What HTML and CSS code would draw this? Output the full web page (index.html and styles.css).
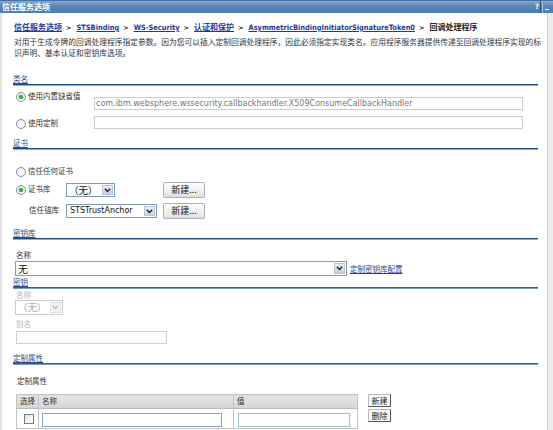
FILE: index.html
```html
<!DOCTYPE html>
<html lang="zh-CN">
<head>
<meta charset="utf-8">
<title>回调处理程序</title>
<link rel="stylesheet" href="styles.css">
</head>
<body>
<div class="window">
  <div class="titlebar">
    <span class="title">信任服务选项</span>
    <span class="tb-icons"><span class="tb-help">?</span><span class="tb-min"></span></span>
  </div>
  <div class="panel">
    <div class="crumbs"><a class="lnk">信任服务选项</a><span class="sep">&gt;</span><a class="lnk lat">STSBinding</a><span class="sep">&gt;</span><a class="lnk lat">WS-Security</a><span class="sep">&gt;</span><a class="lnk">认证和保护</a><span class="sep">&gt;</span><a class="lnk lat">AsymmetricBindingInitiatorSignatureToken0</a><span class="sep">&gt;</span><span class="cur">回调处理程序</span></div>
    <p class="desc">对用于生成令牌的回调处理程序指定参数。因为您可以插入定制回调处理程序，因此必须指定实现类名。应用程序服务器提供传递至回调处理程序实现的标<br>识声明、基本认证和密钥库选项。</p>

    <div class="sect sect-class"><span class="sect-t">类名</span></div>
    <div class="row row-builtin">
      <span class="radio on"></span><span class="rlabel cls-label">使用内置缺省值</span>
      <span class="tinput wide ro">com.ibm.websphere.wssecurity.callbackhandler.X509ConsumeCallbackHandler</span>
    </div>
    <div class="row row-custom">
      <span class="radio"></span><span class="rlabel cls-label">使用定制</span>
      <span class="tinput wide"></span>
    </div>

    <div class="sect sect-cert"><span class="sect-t">证书</span></div>
    <div class="row row-any"><span class="radio"></span><span class="rlabel">信任任何证书</span></div>
    <div class="cert-grid">
      <div class="gcell"><span class="radio on"></span><span class="rlabel">证书库</span></div>
      <div class="gcell"><span class="select s-none"><span class="sv">（无）</span><span class="sarrow"><svg width="7" height="5" viewBox="0 0 7 5"><polyline points="0.8,0.8 3.5,3.6 6.2,0.8" fill="none" stroke="#222" stroke-width="1.4"/></svg></span></span></div>
      <div class="gcell"><span class="btn">新建...</span></div>
      <div class="gcell"><span class="rlabel indent">信任锚库</span></div>
      <div class="gcell"><span class="select s-anchor"><span class="sv lat">STSTrustAnchor</span><span class="sarrow"><svg width="7" height="5" viewBox="0 0 7 5"><polyline points="0.8,0.8 3.5,3.6 6.2,0.8" fill="none" stroke="#222" stroke-width="1.4"/></svg></span></span></div>
      <div class="gcell"><span class="btn">新建...</span></div>
    </div>

    <div class="sect sect-ks"><span class="sect-t">密钥库</span></div>
    <div class="flabel ks-name">名称</div>
    <div class="ks-row">
      <span class="select s-ks"><span class="sv">无</span><span class="sarrow"><svg width="7" height="5" viewBox="0 0 7 5"><polyline points="0.8,0.8 3.5,3.6 6.2,0.8" fill="none" stroke="#222" stroke-width="1.4"/></svg></span></span>
      <a class="lnk small-link">定制密钥库配置</a>
    </div>

    <div class="sect sect-key"><span class="sect-t">密钥</span></div>
    <div class="flabel dis key-name">名称</div>
    <span class="select s-dis"><span class="sv">（无）</span><span class="sarrow"><svg width="7" height="5" viewBox="0 0 7 5"><polyline points="0.8,0.8 3.5,3.6 6.2,0.8" fill="none" stroke="#b8b8b8" stroke-width="1.4"/></svg></span></span>
    <div class="flabel dis key-alias">别名</div>
    <span class="tinput alias dis-in"></span>

    <div class="sect sect-props"><span class="sect-t">定制属性</span></div>
    <div class="flabel props-label">定制属性</div>
    <div class="props-row">
      <table class="ptable">
        <thead>
          <tr><th class="c-sel">选择</th><th class="c-name">名称</th><th class="c-val">值</th></tr>
        </thead>
        <tbody>
          <tr><td class="c-sel"><span class="chk"></span></td><td class="c-name"><span class="tinput cell-in name-in"></span></td><td class="c-val"><span class="tinput cell-in val-in"></span></td></tr>
        </tbody>
      </table>
      <div class="pbtns"><span class="sbtn">新建</span><span class="sbtn">删除</span></div>
    </div>
  </div>
</div>
</body>
</html>
```

FILE: styles.css
```css
* { box-sizing: border-box; }
html, body { margin: 0; padding: 0; }
body {
  background: #ffffff;
  font-family: "DejaVu Sans", "Noto Sans CJK SC", sans-serif;
  font-size: 7.5px;
  color: #333333;
}
.window {
  width: 553px;
  height: 430px;
  overflow: hidden;
  background: #ededed;
  display: flex;
  flex-direction: column;
}
.titlebar {
  height: 13px;
  flex: none;
  background: linear-gradient(#86abd2, #5a87b7 40%, #4f7cad);
  border-top: 1px solid #46709e;
  display: flex;
  align-items: center;
  justify-content: space-between;
}
.title {
  color: #ffffff;
  font-weight: bold;
  font-size: 8px;
  line-height: 10px;
  padding-left: 2px;
  font-family: "Noto Sans CJK SC", sans-serif;
}
.tb-icons { display: flex; height: 12px; align-items: stretch; }
.tb-help {
  color: #ffffff;
  font-weight: bold;
  font-size: 7px;
  line-height: 12px;
  width: 7px;
  text-align: center;
  border-right: 1px solid #35597f;
  margin-right: 1px;
}
.tb-min {
  width: 9px;
  border-left: 1px solid #9fc0e0;
  position: relative;
  margin-right: 2px;
}
.tb-min::after {
  content: "";
  position: absolute;
  left: 2px; right: 2px; bottom: 3px;
  height: 1px;
  background: #ffffff;
}
.panel {
  flex: 1;
  background: #ffffff;
  border-left: 2px solid #e3e3e3;
  border-right: 1px solid #d2d2d2;
  margin-right: 5px;
  padding: 0 9px 0 11px;
  display: flex;
  flex-direction: column;
  align-items: flex-start;
}
.lnk { color: #1c3b9e; text-decoration: underline; }
.crumbs {
  margin: 8px 0 0 1px;
  font-weight: bold;
  font-size: 8px;
  line-height: 11px;
  white-space: nowrap;
  color: #222222;
  font-family: "Noto Sans CJK SC", sans-serif;
}
.crumbs .lat {
  font-family: "DejaVu Sans Condensed", "DejaVu Sans", sans-serif;
  font-size: 7.4px;
}
.sep { margin: 0 5px 0 4px; font-family: "DejaVu Sans", sans-serif; font-size: 6.5px; }
.cur { color: #222222; }
.desc {
  margin: 3px -4px 0 1px;
  font-size: 7.75px;
  line-height: 11px;
  color: #333333;
  white-space: nowrap;
}
.sect {
  align-self: stretch;
  line-height: 9px;
  height: 10px;
  border-bottom: 1px solid #1e4b84;
  box-shadow: 0 1px 0 #8eb0d8;
}
.sect-t {
  color: #2a4e8e;
  font-size: 7.5px;
  text-decoration: underline;
  margin-left: 0;
}
.sect-class { margin-top: 16px; }
.sect-cert { margin-top: 10px; }
.sect-ks { margin-top: 10px; }
.sect-key { margin-top: 2px; border-bottom-color: #36607f; box-shadow: 0 1px 0 #7e9db5; }
.sect-props { margin-top: 10px; border-bottom-color: #36607f; box-shadow: 0 1px 0 #7e9db5; }

.row { display: flex; align-items: flex-start; }
.radio {
  flex: none;
  width: 10px;
  height: 10px;
  border-radius: 50%;
  border: 1px solid #7d8fa3;
  background: radial-gradient(circle at 60% 60%, #ffffff 30%, #e4e4de 100%);
  position: relative;
  margin-left: 3px;
}
.radio.on::after {
  content: "";
  position: absolute;
  left: 2px; top: 2px;
  width: 4px; height: 4px;
  border-radius: 50%;
  background: #3ca83c;
  box-shadow: 0 0 0 0.5px #8fd28f;
}
.rlabel { line-height: 10px; margin-left: 2px; white-space: nowrap; }
.cls-label { width: 66px; }
.row-builtin { margin-top: 7px; }
.row-builtin .tinput { margin-top: 5px; height: 14px; line-height: 12px; }
.row-custom { margin-top: 6px; }
.row-custom .radio, .row-custom .rlabel { margin-top: 3px; }
.tinput {
  display: inline-block;
  border: 1px solid #cdcdcd;
  background: #ffffff;
  font-size: 8px;
  color: #777777;
  white-space: nowrap;
  overflow: hidden;
}
.tinput.wide { width: 429px; height: 13px; line-height: 11px; padding-left: 1px; }
.row-custom .tinput { height: 13px; }
.row-any { margin-top: 18px; }

.cert-grid {
  margin-top: 5px;
  display: grid;
  grid-template-columns: 53px 97px auto;
  grid-template-rows: 16px 16px;
  row-gap: 5px;
}
.gcell { display: flex; align-items: center; }
.indent { margin-left: 16px; }
.select {
  display: inline-flex;
  align-items: stretch;
  border: 1px solid #7f9db9;
  background: #ffffff;
  height: 14px;
}
.sv {
  flex: 1;
  font-size: 9.5px;
  line-height: 12px;
  padding-left: 2px;
  color: #111111;
  white-space: nowrap;
  overflow: hidden;
  font-family: "Noto Sans CJK SC", sans-serif;
}
.sv.lat { font-family: "DejaVu Sans", sans-serif; font-size: 8px; padding-left: 3px; }
.sarrow {
  width: 11px;
  flex: none;
  margin: 1px;
  background: linear-gradient(#eef1f7, #c7d1e2);
  border: 1px solid #b9c5d8;
  display: flex;
  align-items: center;
  justify-content: center;
}
.s-none { width: 49px; }
.s-anchor { width: 91px; height: 14px; }
.btn {
  display: inline-block;
  width: 42px;
  height: 16px;
  line-height: 14px;
  text-align: center;
  font-size: 9px;
  color: #111111;
  border: 1px solid #a7b2c2;
  border-radius: 2px;
  background: linear-gradient(#fdfdfd, #ececec 70%, #dedede);
  font-family: "Noto Sans CJK SC", sans-serif;
}
.flabel { line-height: 9px; margin-left: 3px; }
.ks-name { margin-top: 12px; }
.ks-row { margin-top: 1px; display: flex; align-items: center; }
.s-ks { width: 332px; height: 15px; margin-left: 2px; border-color: #8c9ab0; }
.s-ks .sv { font-size: 10px; line-height: 13px; }
.small-link { margin-left: 3px; font-size: 7.5px; line-height: 9px; margin-top: 2px; }
.dis { color: #b5b5b5; }
.key-name { margin-top: 4px; line-height: 8px; }
.s-dis {
  width: 48px;
  height: 15px;
  margin-left: 2px;
  border-color: #cccccc;
}
.s-dis .sv { color: #aaaaaa; }
.s-dis .sarrow { background: #f2f2f2; border-color: #e0e0e0; }
.key-alias { margin-top: 5px; }
.alias { width: 151px; height: 13px; margin: 2px 0 0 3px; border-color: #d0d0d0; }
.props-label { margin-top: 13px; line-height: 10px; margin-left: 4px; }
.props-row { margin-top: 7px; display: flex; align-items: flex-start; margin-left: 3px; }
.ptable {
  border-collapse: collapse;
  width: 341px;
  table-layout: fixed;
  border: 1px solid #c4c4c4;
}
.ptable th {
  height: 14px;
  padding: 0 0 0 3px;
  font-weight: normal;
  text-align: left;
  font-size: 7.5px;
  color: #333333;
  background: linear-gradient(#e6e6e6, #d4d4d4);
  border: 1px solid #c4c4c4;
  border-bottom-color: #bdbdbd;
  line-height: 12px;
}
.ptable td {
  height: 20px;
  padding: 0;
  border-left: 1px solid #c4c4c4;
  border-right: 1px solid #c4c4c4;
  vertical-align: top;
}
.c-sel { width: 22px; }
.c-name { width: 195px; }
.c-val { width: 124px; }
.chk {
  display: block;
  width: 10px;
  height: 10px;
  border: 1px solid #6f7f92;
  background: linear-gradient(135deg, #e6e6e0, #ffffff);
  margin: 5px 0 0 7px;
}
.cell-in {
  display: block;
  height: 14px;
  border-color: #8aa3bf;
  margin-top: 4px;
}
.name-in { width: 180px; margin-left: 3px; }
.val-in { width: 112px; margin-left: 4px; border-color: #9fc3cf; }
.pbtns { display: flex; flex-direction: column; gap: 2px; margin-left: 10px; }
.sbtn {
  display: block;
  width: 23px;
  height: 13px;
  line-height: 11px;
  text-align: center;
  font-size: 8px;
  color: #222222;
  background: #fafafa;
  border: 1px solid #555555;
  border-top-color: #bbbbbb;
  border-left-color: #bbbbbb;
  font-family: "Noto Sans CJK SC", sans-serif;
}
```
